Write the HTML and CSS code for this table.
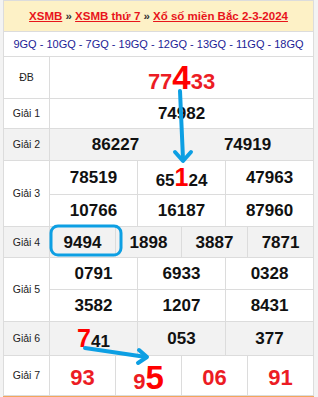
FILE: index.html
```html
<!DOCTYPE html>
<html lang="vi">
<head>
<meta charset="utf-8">
<link rel="stylesheet" href="styles.css">
</head>
<body>
<div class="box">
  <div class="title"><a href="#">XSMB</a> » <a href="#">XSMB thứ 7</a> » <a href="#">Xổ số miền Bắc 2-3-2024</a></div>
  <div class="gq">9GQ - 10GQ - 7GQ - 19GQ - 12GQ - 13GQ - 11GQ - 18GQ</div>
  <table class="kq">
    <colgroup>
      <col class="c-label">
      <col><col><col><col><col><col><col><col><col><col><col><col>
    </colgroup>
    <tr class="r-db">
      <td class="lbl">ĐB</td>
      <td colspan="12" class="db">77<span class="big">4</span>33</td>
    </tr>
    <tr class="r-1">
      <td class="lbl">Giải 1</td>
      <td colspan="12">74982</td>
    </tr>
    <tr class="r-2 alt">
      <td class="lbl">Giải 2</td>
      <td colspan="6">86227</td>
      <td colspan="6">74919</td>
    </tr>
    <tr class="r-3a">
      <td class="lbl" rowspan="2">Giải 3</td>
      <td colspan="4">78519</td>
      <td colspan="4">65<span class="mid">1</span>24</td>
      <td colspan="4">47963</td>
    </tr>
    <tr class="r-3b">
      <td colspan="4">10766</td>
      <td colspan="4">16187</td>
      <td colspan="4">87960</td>
    </tr>
    <tr class="r-4 alt">
      <td class="lbl">Giải 4</td>
      <td colspan="3">9494</td>
      <td colspan="3">1898</td>
      <td colspan="3">3887</td>
      <td colspan="3">7871</td>
    </tr>
    <tr class="r-5a">
      <td class="lbl" rowspan="2">Giải 5</td>
      <td colspan="4">0791</td>
      <td colspan="4">6933</td>
      <td colspan="4">0328</td>
    </tr>
    <tr class="r-5b">
      <td colspan="4">3582</td>
      <td colspan="4">1207</td>
      <td colspan="4">8431</td>
    </tr>
    <tr class="r-6 alt">
      <td class="lbl">Giải 6</td>
      <td colspan="4"><span class="mid">7</span>41</td>
      <td colspan="4">053</td>
      <td colspan="4">377</td>
    </tr>
    <tr class="r-7">
      <td class="lbl">Giải 7</td>
      <td colspan="3" class="g7">93</td>
      <td colspan="3" class="g7">9<span class="big7">5</span></td>
      <td colspan="3" class="g7">06</td>
      <td colspan="3" class="g7">91</td>
    </tr>
  </table>
  <svg class="marks" width="318" height="397" viewBox="0 0 318 397">
    <g fill="none" stroke="#0d9fe3" stroke-width="4" stroke-linecap="round" stroke-linejoin="round">
      <path d="M180 91 L183 159"/>
      <path d="M175 152 L183 161 L191 152"/>
      <rect x="51" y="226" width="70" height="29" rx="7" ry="7" stroke-width="3"/>
      <path d="M85 348 L146 357"/>
      <path d="M139 350 L147 357 L138 363"/>
    </g>
  </svg>
</div>
</body>
</html>
```
FILE: styles.css
```css
html, body {
  margin: 0;
  padding: 0;
}
body {
  background: #f3f3f3;
  width: 318px;
  height: 397px;
  overflow: hidden;
  font-family: "Liberation Sans", Arial, sans-serif;
}
.box {
  position: relative;
  margin: 0 0 0 3px;
  width: 311px;
  border-top: 1px solid #dcdcdc;
  border-bottom: 2px solid #f4a55c;
  background: #fff;
}
.title {
  height: 30px;
  line-height: 30px;
  background: #fdf1c6;
  text-align: center;
  font-size: 11.5px;
  font-weight: bold;
  color: #333;
  border-left: 1px solid #dcdcdc;
  border-right: 1px solid #dcdcdc;
  border-bottom: 1px solid #dcdcdc;
  white-space: nowrap;
}
.title a {
  color: #e8141b;
  text-decoration: underline;
}
.gq {
  height: 24px;
  line-height: 25px;
  text-align: center;
  font-size: 11px;
  color: #1c1c96;
  border-left: 1px solid #dcdcdc;
  border-right: 1px solid #dcdcdc;
  white-space: nowrap;
}
.kq {
  width: 311px;
  border-collapse: collapse;
  table-layout: fixed;
}
.kq col { width: 22px; }
.kq col.c-label { width: 46px; }
.kq td {
  border: 1px solid #dcdcdc;
  padding: 0;
  text-align: center;
  vertical-align: middle;
  font-size: 17px;
  font-weight: bold;
  color: #111;
  line-height: 1;
}
.kq td.lbl {
  font-size: 10.5px;
  font-weight: normal;
  color: #222;
}
.alt td { background: #f2f2f2; }
.r-db { height: 42px; }
.r-1 { height: 30px; }
.r-2 { height: 32px; }
.r-3a { height: 34px; }
.r-3b { height: 32px; }
.r-4 { height: 31px; }
.r-5a { height: 32px; }
.r-5b { height: 32px; }
.r-6 { height: 34px; }
.r-7 { height: 40px; }
.kq td.db {
  font-size: 22px;
  color: #ec1c24;
}
.big {
  font-size: 33px;
  color: #ff0000;
}
.mid {
  font-size: 25px;
  color: #ff0000;
}
.kq td.g7 {
  font-size: 22px;
  color: #ec1c24;
  padding-top: 4px;
}
.big7 {
  font-size: 33px;
  color: #ff0000;
}
.marks {
  position: absolute;
  left: -3px;
  top: -1px;
  pointer-events: none;
}
```
